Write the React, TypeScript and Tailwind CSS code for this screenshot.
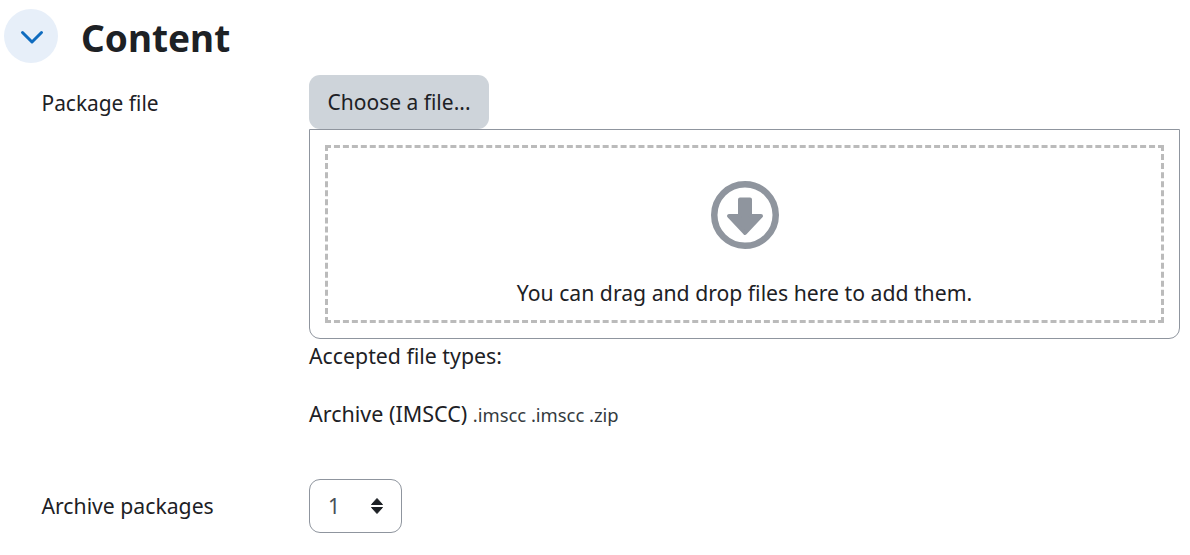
export default function App() {
  return (
    <div className="w-[1190px] h-[555px] bg-white overflow-hidden text-[#1d2125] font-['Noto_Sans',sans-serif] text-[21.2px]">
      {/* Section header */}
      <div className="flex pl-1 pt-[9px] h-[75px] items-start">
        <div className="w-[54px] h-[54px] rounded-full bg-[#e7eff9] flex items-center justify-center flex-shrink-0">
          <svg className="w-[26px] h-[26px] text-[#0f6cbf] overflow-visible" fill="none" stroke="currentColor" strokeWidth={3} viewBox="0 0 26 26">
            <path strokeLinecap="round" strokeLinejoin="round" d="M4.500 9.500L14 19l9.500-9.500" />
          </svg>
        </div>
        <h3 className="ml-[23px] text-[37px] leading-[58px] font-bold">Content</h3>
      </div>

      {/* Package file */}
      <div className="flex pl-[41.500px]">
        <div className="w-[267.500px] flex-shrink-0 pt-[14px] leading-[28px] text-[20.900px]">Package file</div>
        <div className="w-[871px]">
          <button className="block w-[180px] h-[54px] pt-[1px] bg-[#ced4da] rounded-[11px] text-center text-[21px]">Choose a file...</button>
          <div className="h-[210px] border border-[#8f959e] rounded-b-[11px] p-[15px]">
            <div className="h-[178px] border-[3px] border-dashed border-[#bbbbbb] flex flex-col items-center">
              <svg className="mt-[33px] w-[68px] h-[68px]" viewBox="0 0 68 68">
                <circle cx="34" cy="34" r="30.750" fill="none" stroke="#8f959e" strokeWidth={6.500} />
                <path fill="#8f959e" strokeLinejoin="round" stroke="#8f959e" strokeWidth={4} d="M29 18.500h10v16.500h11L34 52 18 35h11z" />
              </svg>
              <div className="mt-[30px] leading-[28px]">You can drag and drop files here to add them.</div>
            </div>
          </div>
          <div className="mt-[3px] leading-[28px] text-[21.300px]">Accepted file types:</div>
          <div className="mt-[30px] leading-[28px] text-[21.500px]">
            Archive (IMSCC) <span className="text-[18.400px] text-[#343a40]">.imscc .imscc .zip</span>
          </div>
        </div>
      </div>

      {/* Archive packages */}
      <div className="flex pl-[41.500px] mt-[50px]">
        <div className="w-[267.500px] flex-shrink-0 pt-[13px] leading-[28px]">Archive packages</div>
        <div className="w-[93px] h-[54px] border border-[#8f959e] rounded-[11px] flex items-center justify-between pl-[18px] pr-[17px] text-[#495057]">
          <span>1</span>
          <svg className="w-[14px] h-[18px]" viewBox="0 0 14 18">
            <path fill="#1d2125" strokeLinejoin="round" stroke="#1d2125" strokeWidth={1} d="M7 1.500 12.500 7.500h-11zM1.500 10.500h11L7 16.500z" />
          </svg>
        </div>
      </div>
    </div>
  );
}
